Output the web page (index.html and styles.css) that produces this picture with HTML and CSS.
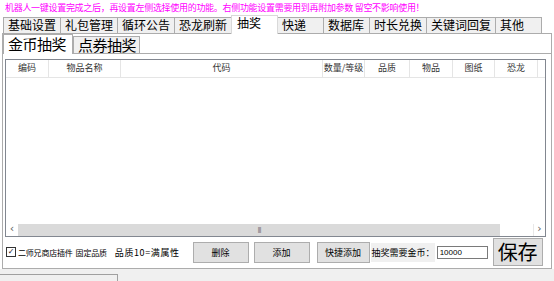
FILE: index.html
```html
<!DOCTYPE html>
<html lang="zh">
<head>
    <meta charset="UTF-8">
    <title>抽奖设置</title>
    <link rel="stylesheet" href="styles.css">
</head>
<body>
    <div class="notice">机器人一键设置完成之后，再设置左侧选择使用的功能。右侧功能设置需要用到再附加参数 留空不影响使用！</div>

    <div class="tabs">
        <div class="tab">基础设置</div>
        <div class="tab">礼包管理</div>
        <div class="tab">循环公告</div>
        <div class="tab">恐龙刷新</div>
        <div class="tab active">抽奖</div>
        <div class="tab">快递</div>
        <div class="tab">数据库</div>
        <div class="tab">时长兑换</div>
        <div class="tab">关键词回复</div>
        <div class="tab">其他</div>
    </div>

    <div class="panel">
        <div class="subtabs">
            <div class="subtab active">金币抽奖</div>
            <div class="subtab">点券抽奖</div>
        </div>

        <div class="list">
            <div class="list-head">
                <div class="col" style="width:43px">编码</div>
                <div class="col" style="width:72px">物品名称</div>
                <div class="col" style="width:202px">代码</div>
                <div class="col" style="width:42px">数量/等级</div>
                <div class="col" style="width:45px">品质</div>
                <div class="col" style="width:43px">物品</div>
                <div class="col" style="width:42px">图纸</div>
                <div class="col" style="width:43px">恐龙</div>
            </div>
            <div class="list-body"></div>
            <div class="hscroll">
                <div class="arrow">&lsaquo;</div>
                <div class="thumb"><span class="grip">III</span></div>
                <div class="track"></div>
                <div class="arrow right">&rsaquo;</div>
            </div>
        </div>

        <div class="actions">
            <span class="check">&#10003;</span>
            <span class="opt">二师兄商店插件</span>
            <span class="opt gap1">固定品质</span>
            <span class="opt gap2">品质10=满属性</span>
            <button class="btn del">删除</button>
            <button class="btn add">添加</button>
            <button class="btn quick">快捷添加</button>
            <span class="coin-label">抽奖需要金币：</span>
            <input class="coin-input" type="text" value="10000">
            <button class="btn save">保存</button>
        </div>
    </div>

    <div class="status">
        <div class="status-box"></div>
    </div>
</body>
</html>
```

FILE: styles.css
```css
* {
    margin: 0;
    padding: 0;
    box-sizing: border-box;
    font-family: "Noto Sans CJK SC", "Liberation Sans", sans-serif;
}
body {
    width: 554px;
    height: 281px;
    overflow: hidden;
    background-color: #fff;
    color: #000;
}
.notice {
    height: 17px;
    line-height: 16px;
    padding-left: 5px;
    font-size: 9px;
    letter-spacing: -0.3px;
    color: #ff00ff;
    white-space: nowrap;
}
.tabs {
    display: flex;
    align-items: flex-end;
    height: 16px;
    padding-left: 3px;
}
.tab {
    height: 16px;
    min-width: 47px;
    padding: 0 4px;
    margin-right: -1px;
    border: 1px solid #acacac;
    border-bottom: none;
    background-color: #f0f0f0;
    font-size: 12px;
    line-height: 14px;
    white-space: nowrap;
}
.tab.active {
    position: relative;
    z-index: 1;
    height: 19px;
    margin-bottom: -1px;
    padding: 0 5px;
    background-color: #fff;
    border-color: #d9d9d9;
    line-height: 14px;
}
.panel {
    width: 550px;
    height: 236px;
    margin-left: 2px;
    border: 1px solid #acacac;
    display: flex;
    flex-direction: column;
}
.subtabs {
    display: flex;
    align-items: flex-end;
    height: 20px;
    border-bottom: 1px solid #acacac;
}
.subtab {
    width: 67px;
    height: 17px;
    border: 1px solid #acacac;
    border-bottom: none;
    background-color: #f0f0f0;
    font-size: 15px;
    line-height: 15px;
    padding-left: 4px;
    letter-spacing: -0.5px;
    white-space: nowrap;
}
.subtab.active {
    width: 70px;
    height: 20px;
    margin-bottom: -1px;
    background-color: #fff;
    line-height: 17px;
    padding-left: 4px;
}
.list {
    height: 178px;
    margin: 5px 5px 0 2px;
    border: 1px solid #828790;
    display: flex;
    flex-direction: column;
}
.list-head {
    display: flex;
    height: 18px;
    border-bottom: 1px solid #e5e5e5;
}
.col {
    border-right: 1px solid #e5e5e5;
    font-size: 9px;
    line-height: 16px;
    color: #333;
    text-align: center;
    white-space: nowrap;
}
.list-body {
    flex: 1;
}
.hscroll {
    display: flex;
    height: 12px;
    background-color: #f7f7f7;
}
.arrow {
    width: 12px;
    font-size: 11px;
    line-height: 10px;
    text-align: center;
    color: #606060;
    background-color: #fff;
    font-family: "DejaVu Sans", sans-serif;
}
.arrow.right {
    border-left: 1px solid #e8e8e8;
}
.thumb {
    width: 482px;
    background-color: #dadada;
    text-align: center;
    font-size: 7px;
    line-height: 12px;
    color: #777;
    letter-spacing: -1px;
}
.track {
    flex: 1;
    background-color: #fff;
}
.actions {
    display: flex;
    align-items: center;
    height: 28px;
    margin-top: 1px;
    font-size: 8px;
}
.check {
    width: 10px;
    height: 10px;
    margin-left: 3px;
    border: 1px solid #333;
    font-size: 8px;
    line-height: 8px;
    text-align: center;
    font-family: "DejaVu Sans", sans-serif;
    font-weight: bold;
    color: #222;
}
.opt {
    margin-left: 2px;
    white-space: nowrap;
    letter-spacing: -0.2px;
}
.gap1 {
    margin-left: 3px;
}
.gap2 {
    margin-left: 8px;
    font-size: 9px;
    letter-spacing: 0.6px;
}
.btn {
    height: 21px;
    border: 1px solid #adadad;
    background-color: #e1e1e1;
    font-size: 9px;
    color: #000;
}
.del {
    width: 56px;
    margin-left: 13px;
}
.add {
    width: 56px;
    margin-left: 5px;
}
.quick {
    width: 53px;
    margin-left: 7px;
}
.coin-label {
    height: 19px;
    margin-left: 1px;
    padding-left: 1px;
    line-height: 19px;
    font-size: 9px;
    background-color: #f0f0f0;
    white-space: nowrap;
}
.coin-input {
    width: 51px;
    height: 13px;
    margin-left: 2px;
    border: 1px solid #7a7a7a;
    font-size: 8px;
    padding-left: 2px;
    font-family: "Liberation Sans", sans-serif;
}
.save {
    width: 50px;
    height: 28px;
    margin-left: 5px;
    font-size: 20px;
    line-height: 24px;
}
.status {
    height: 13px;
    background-color: #f0f0f0;
    padding-top: 5px;
}
.status-box {
    width: 118px;
    height: 8px;
    border-top: 1px solid #a0a0a0;
    border-right: 1px solid #a0a0a0;
}
```
